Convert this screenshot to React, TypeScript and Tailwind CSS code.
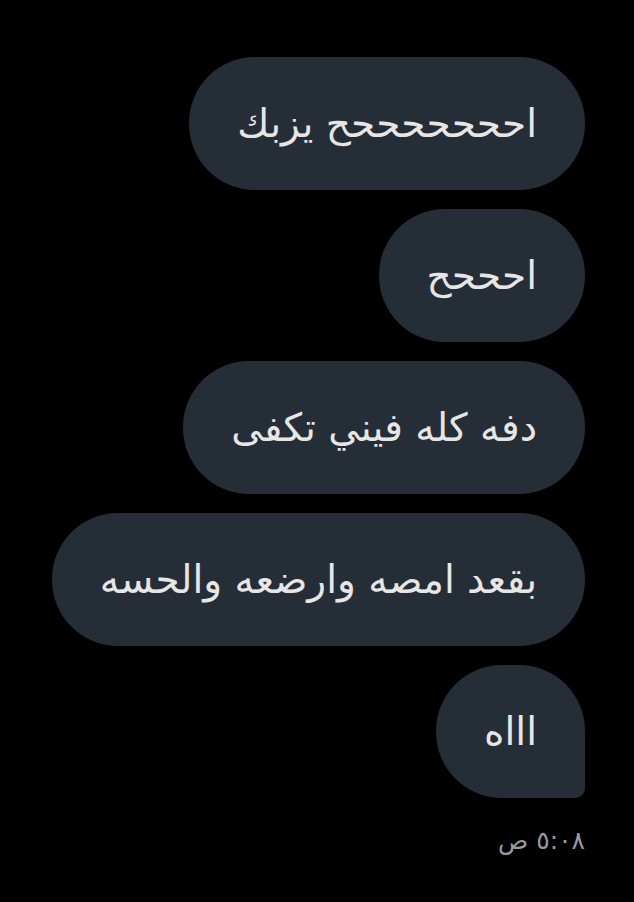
const messages = [
  "احححححححح يزبك",
  "احححح",
  "دفه كله فيني تكفى",
  "بقعد امصه وارضعه والحسه",
  "اااه",
];

function Bubble({ text, last }: { text: string; last: boolean }) {
  return (
    <div
      className={
        last
          ? "flex h-[133px] items-center rounded-[66px] rounded-br-[10px] bg-[#252d36] px-12"
          : "flex h-[133px] items-center rounded-[66px] bg-[#252d36] px-12"
      }
    >
      <span className="whitespace-nowrap text-[39px] leading-none text-[#e6e6e6]">{text}</span>
    </div>
  );
}

export default function App() {
  return (
    <div
      dir="rtl"
      className="min-h-[902px] w-full bg-black pt-[57px] pr-[49px]"
      style={{ fontFamily: '"DejaVu Sans", sans-serif' }}
    >
      <div className="flex flex-col items-start gap-[19px]">
        {messages.map((m, i) => (
          <Bubble key={i} text={m} last={i === messages.length - 1} />
        ))}
      </div>
      <p className="mt-[30px] text-[25px] leading-none text-[#9a9a9a]">٥:٠٨ ص</p>
    </div>
  );
}
